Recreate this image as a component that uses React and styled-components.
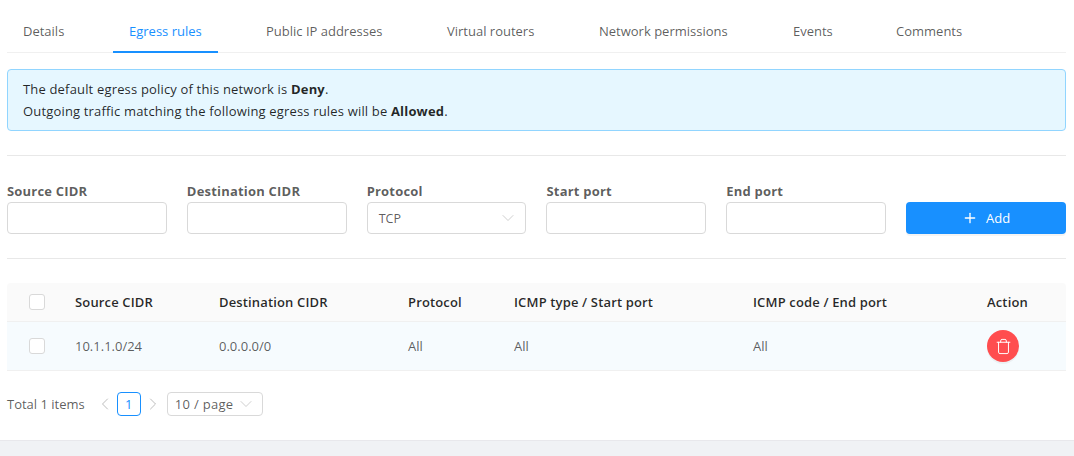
import styled, { createGlobalStyle } from "styled-components";
import { Plus, Trash, ChevronDown, ChevronLeft, ChevronRight } from "lucide-react";

const GlobalStyle = createGlobalStyle`
  html, body {
    margin: 0;
    padding: 0;
    background: #fff;
  }
  body {
    font-family: "Open Sans", "Noto Sans", "Liberation Sans", sans-serif;
    font-size: 13px;
    color: rgba(0, 0, 0, 0.65);
  }
`;

const Page = styled.div`
  width: 1074px;
  height: 456px;
  overflow: hidden;
  display: flex;
  flex-direction: column;
`;
const Card = styled.div`
  height: 441px;
  box-sizing: border-box;
  padding: 10px 8px 0 7px;
  background: #fff;
  border-bottom: 1px solid #e8e8ec;
`;
const Footer = styled.div`
  flex: 1;
  background: #f0f2f5;
`;
const TabBar = styled.div`
  display: flex;
  height: 43px;
  box-sizing: border-box;
  border-bottom: 1px solid #f0f0f0;
`;
const Tab = styled.div`
  padding: 12px 16px 0;
  margin-right: 32px;
  height: 43px;
  box-sizing: border-box;
  line-height: 19px;
  white-space: nowrap;
  width: ${(props) => props.width}px;
  color: ${(props) => (props.active ? "#1890ff" : "rgba(0, 0, 0, 0.65)")};
  border-bottom: 2px solid ${(props) => (props.active ? "#1890ff" : "transparent")};
`;
const Alert = styled.div`
  margin-top: 16px;
  height: 62px;
  box-sizing: border-box;
  padding: 8px 15px;
  background: #e6f7ff;
  border: 1px solid #91d5ff;
  border-radius: 4px;
  line-height: 22px;
  letter-spacing: 0.17px;
  color: rgba(0, 0, 0, 0.85);
  b {
    font-weight: 700;
  }
`;
const Divider = styled.div`
  height: 1px;
  background: #e8e8e8;
  margin-top: ${(props) => props.top}px;
`;
const FormRow = styled.div`
  display: grid;
  grid-template-columns: repeat(6, 1fr);
  column-gap: 20px;
  margin-top: 26px;
  align-items: end;
`;
const Field = styled.div`
  display: flex;
  flex-direction: column;
`;
const Label = styled.label`
  font-weight: 700;
  line-height: 19px;
  margin-bottom: 1px;
  letter-spacing: 0.2px;
  color: rgba(0, 0, 0, 0.65);
`;
const Input = styled.div`
  height: 32px;
  box-sizing: border-box;
  border: 1px solid #d9d9d9;
  border-radius: 4px;
  background: #fff;
`;
const Select = styled(Input)`
  display: flex;
  align-items: center;
  justify-content: space-between;
  padding: 0 7px 0 11px;
  color: rgba(0, 0, 0, 0.65);
  font-size: 12.5px;
  svg {
    color: #bfbfbf;
  }
`;
const AddButton = styled.button`
  height: 32px;
  border: 0;
  border-radius: 4px;
  background: #1890ff;
  color: #fff;
  font: inherit;
  display: flex;
  align-items: center;
  justify-content: center;
  gap: 8px;
  box-shadow: 0 2px 0 rgba(0, 0, 0, 0.045);
`;
const Table = styled.div`
  margin-top: 24px;
`;
const Row = styled.div`
  display: grid;
  grid-template-columns: 52px 144px 189px 106px 239px 234px 95px;
  align-items: center;
  height: ${(props) => (props.head ? 39 : 49)}px;
  box-sizing: border-box;
  border-bottom: 1px solid #f0f0f0;
  background: ${(props) => (props.head ? "#fafafa" : "#f6fbfe")};
  border-radius: ${(props) => (props.head ? "4px 4px 0 0" : "0")};
  color: ${(props) => (props.head ? "rgba(0, 0, 0, 0.85)" : "rgba(0, 0, 0, 0.65)")};
  font-weight: ${(props) => (props.head ? 600 : 400)};
  letter-spacing: ${(props) => (props.head ? "0.15px" : "0")};
`;
const Cell = styled.div`
  padding: 0 16px;
  white-space: nowrap;
`;
const CheckCell = styled.div`
  display: flex;
  padding-left: 22px;
`;
const Checkbox = styled.span`
  width: 16px;
  height: 16px;
  box-sizing: border-box;
  background: #fff;
  border: 1px solid #d9d9d9;
  border-radius: 3px;
`;
const DangerButton = styled.button`
  width: 32px;
  height: 32px;
  padding: 0;
  border: 0;
  border-radius: 50%;
  background: #ff4d4f;
  color: #fff;
  display: flex;
  align-items: center;
  justify-content: center;
  box-shadow: 0 2px 0 rgba(0, 0, 0, 0.045);
`;
const Pagination = styled.div`
  display: flex;
  align-items: center;
  margin-top: 21px;
  height: 24px;
`;
const Total = styled.span`
  margin-right: 8px;
`;
const Arrow = styled.span`
  display: flex;
  width: 24px;
  justify-content: center;
  color: #b0b0b0;
`;
const PageNum = styled.span`
  width: 24px;
  height: 24px;
  box-sizing: border-box;
  border: 1px solid #1890ff;
  border-radius: 4px;
  color: #1890ff;
  text-align: center;
  line-height: 22px;
`;
const PageSize = styled.div`
  margin-left: 2px;
  width: 96px;
  height: 24px;
  box-sizing: border-box;
  border: 1px solid #d9d9d9;
  border-radius: 4px;
  display: flex;
  align-items: center;
  justify-content: space-between;
  padding: 0 6px 0 7px;
  letter-spacing: 0.3px;
  svg {
    color: #bfbfbf;
  }
`;

const tabs = [
  ["Details", 74],
  ["Egress rules", 105],
  ["Public IP addresses", 149],
  ["Virtual routers", 120],
  ["Network permissions", 162],
  ["Events", 71],
  ["Comments", 100],
];

export default function App() {
  return (
    <Page>
      <GlobalStyle />
      <Card>
        <TabBar>
          {tabs.map(([name, width]) => (
            <Tab key={name} width={width} active={name === "Egress rules"}>
              {name}
            </Tab>
          ))}
        </TabBar>
        <Alert>
          <div>
            The default egress policy of this network is <b>Deny</b>.
          </div>
          <div>
            Outgoing traffic matching the following egress rules will be <b>Allowed</b>.
          </div>
        </Alert>
        <Divider top={24} />
        <FormRow>
          <Field>
            <Label>Source CIDR</Label>
            <Input />
          </Field>
          <Field>
            <Label>Destination CIDR</Label>
            <Input />
          </Field>
          <Field>
            <Label>Protocol</Label>
            <Select>
              TCP
              <ChevronDown size={20} strokeWidth={0.9} />
            </Select>
          </Field>
          <Field>
            <Label>Start port</Label>
            <Input />
          </Field>
          <Field>
            <Label>End port</Label>
            <Input />
          </Field>
          <AddButton>
            <Plus size={16} strokeWidth={2} />
            Add
          </AddButton>
        </FormRow>
        <Divider top={24} />
        <Table>
          <Row head>
            <CheckCell>
              <Checkbox />
            </CheckCell>
            <Cell>Source CIDR</Cell>
            <Cell>Destination CIDR</Cell>
            <Cell>Protocol</Cell>
            <Cell>ICMP type / Start port</Cell>
            <Cell>ICMP code / End port</Cell>
            <Cell>Action</Cell>
          </Row>
          <Row>
            <CheckCell>
              <Checkbox />
            </CheckCell>
            <Cell>10.1.1.0/24</Cell>
            <Cell>0.0.0.0/0</Cell>
            <Cell>All</Cell>
            <Cell>All</Cell>
            <Cell>All</Cell>
            <Cell>
              <DangerButton>
                <Trash size={17} strokeWidth={1.4} />
              </DangerButton>
            </Cell>
          </Row>
        </Table>
        <Pagination>
          <Total>Total 1 items</Total>
          <Arrow>
            <ChevronLeft size={20} strokeWidth={1} />
          </Arrow>
          <PageNum>1</PageNum>
          <Arrow>
            <ChevronRight size={20} strokeWidth={1} />
          </Arrow>
          <PageSize>
            10 / page
            <ChevronDown size={20} strokeWidth={0.9} />
          </PageSize>
        </Pagination>
      </Card>
      <Footer />
    </Page>
  );
}
